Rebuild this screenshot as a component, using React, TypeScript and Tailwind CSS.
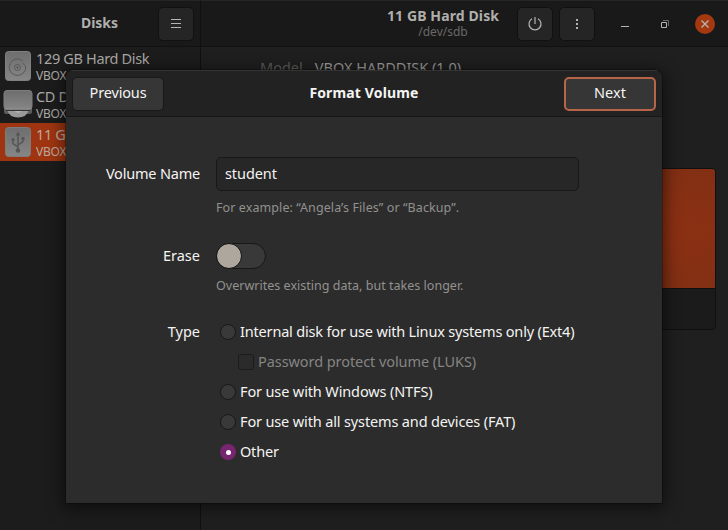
import React from "react";

function HardDiskIcon() {
  return (
    <svg width="26" height="30" viewBox="0 0 26 30" fill="none">
      <defs>
        <linearGradient id="metal" x1="0" y1="0" x2="0" y2="1">
          <stop offset="0" stopColor="#6e6e6e" />
          <stop offset="1" stopColor="#868686" />
        </linearGradient>
      </defs>
      <rect x="0.5" y="0.5" width="25" height="29" rx="3" fill="url(#metal)" stroke="#808080" />
      <path d="M17.800 9.800A8.300 8.300 0 1 0 20.800 16L17.600 11.800" stroke="#555" strokeWidth="0.900" />
      <circle cx="12.500" cy="16.500" r="3" stroke="#555" strokeWidth="0.900" />
      <circle cx="12.500" cy="16.500" r="1" fill="#4a4a4a" />
    </svg>
  );
}

function OpticalDriveIcon() {
  return (
    <svg width="30" height="28" viewBox="0 0 30 28" fill="none">
      <path d="M1 19h28v3q0 2-2 2H3q-2 0-2-2z" fill="#5b5b5b" />
      <path d="M4 20h22q-2.500 7.500-11 7.500T4 20z" fill="#999" />
      <path d="M11 20h8q-1.500 3-4 3t-4-3z" fill="#b4b4b4" />
      <rect x="1" y="0.500" width="28" height="19" rx="3" fill="url(#metal)" stroke="#7e7e7e" />
      <path d="M1.500 18.500h27" stroke="#8b8b8b" />
      <path d="M3 20.500h24" stroke="#343434" />
    </svg>
  );
}

function UsbDiskIcon() {
  return (
    <svg width="26" height="30" viewBox="0 0 26 30" fill="none">
      <rect x="0.500" y="0.500" width="25" height="29" rx="3" fill="url(#metal)" stroke="#7c7c7c" />
      <path d="M13 24V7M13 20l-5-3.500V13M13 18l5-3.500V12" stroke="#555" strokeWidth="1.500" />
      <path d="M13 4.500l-2.400 4h4.800z" fill="#555" />
      <circle cx="13" cy="23.500" r="2.200" fill="#555" />
      <circle cx="8" cy="12.500" r="1.600" fill="#555" />
      <rect x="16.500" y="10" width="3" height="3" fill="#555" />
    </svg>
  );
}

function HeaderButton({ className = "", children }: { className?: string; children: React.ReactNode }) {
  return (
    <button className={`flex h-[34px] w-9 shrink-0 items-center justify-center rounded-[5px] border border-[#111] bg-[#252525] text-[#b4b4b2] ${className}`}>
      {children}
    </button>
  );
}

function DiskRow({ icon, title, selected = false }: { icon: React.ReactNode; title: string; selected?: boolean }) {
  return (
    <div className={`flex h-[38px] items-center whitespace-nowrap ${selected ? "bg-[#9f3510]" : ""}`}>
      <div className="flex w-9 shrink-0 justify-center">{icon}</div>
      <div className={selected ? "text-[#bcaaa0]" : "text-[#aaa9a6]"}>
        <div className="h-[19px] text-[14.5px] leading-[18px] tracking-[-0.34px]">{title}</div>
        <div className="h-4 text-[12px] leading-[15px] tracking-[-0.2px]">VBOX HARDDISK</div>
      </div>
    </div>
  );
}

function Radio({ checked = false }: { checked?: boolean }) {
  return (
    <span className={`flex size-4 shrink-0 items-center justify-center rounded-full ${checked ? "bg-[#772571]" : "border border-[#181818] bg-[#393939]"}`}>
      {checked && <span className="size-[5px] rounded-full bg-white" />}
    </span>
  );
}

function RadioRow({ label, checked, className }: { label: string; checked?: boolean; className: string }) {
  return (
    <label className="flex h-[30px] items-center gap-1">
      <Radio checked={checked} />
      <span className={className}>{label}</span>
    </label>
  );
}

function FormatDialog() {
  return (
    <div className="absolute top-[70px] left-[66px] flex h-[433px] w-[596px] flex-col overflow-hidden rounded-t-[8px] bg-[#2c2c2c] text-[14.5px] text-[#f4f4f2] shadow-[0_3px_16px_3px_rgba(0,0,0,0.5),0_0_0_1px_rgba(0,0,0,0.25)]">
      <div className="flex h-[47px] shrink-0 items-center justify-between border-t border-b border-t-[#343434] border-b-[#161616] bg-[#222] px-1.5">
        <button className="h-[34px] w-[92px] rounded-[5px] border border-[#181818] bg-[#363636] pb-0.5 tracking-[-0.15px]">Previous</button>
        <h1 className="pb-0.5 text-[14px] font-bold tracking-[0.15px]">Format Volume</h1>
        <button className="h-[34px] w-[92px] rounded-[5px] border-2 border-[#b86448] bg-[#363636] pb-0.5 tracking-[0px]">Next</button>
      </div>
      <div className="flex flex-col pt-10 whitespace-nowrap">
        <div className="flex">
          <span className="mr-4 w-[134px] text-right leading-[32px] tracking-[-0.2px]">Volume Name</span>
          <div>
            <div className="h-[34px] w-[363px] rounded-[5px] border border-[#181818] bg-[#272727] px-2 leading-[30px] tracking-[-0.08px]">student</div>
            <p className="mt-[7px] h-5 text-[12.5px] leading-5 tracking-[0.09px] text-[#92918f]">For example: “Angela’s Files” or “Backup”.</p>
          </div>
        </div>
        <div className="mt-[25px] flex">
          <span className="mr-4 w-[134px] text-right leading-[24px] tracking-[0px]">Erase</span>
          <div>
            <div className="h-[26px] w-[50px] rounded-full border border-[#181818] bg-[#393939]">
              <div className="-mt-px -ml-px size-[26px] rounded-full border border-[#111] bg-[#aea79d]" />
            </div>
            <p className="mt-[7px] h-5 text-[12.5px] leading-5 tracking-[0.02px] text-[#92918f]">Overwrites existing data, but takes longer.</p>
          </div>
        </div>
        <div className="mt-[21px] flex">
          <span className="mr-5 w-[134px] text-right leading-[28px] tracking-[0px]">Type</span>
          <div>
            <RadioRow label="Internal disk for use with Linux systems only (Ext4)" className="tracking-[-0.18px]" />
            <label className="ml-[18px] flex h-[30px] items-center gap-1">
              <span className="size-4 rounded-[3px] border border-[#1c1c1c] bg-[#2b2b2b]" />
              <span className="tracking-[-0.07px] text-[#858583]">Password protect volume (LUKS)</span>
            </label>
            <RadioRow label="For use with Windows (NTFS)" className="tracking-[-0.13px]" />
            <RadioRow label="For use with all systems and devices (FAT)" className="tracking-[-0.14px]" />
            <RadioRow label="Other" checked className="tracking-[-0.2px]" />
          </div>
        </div>
      </div>
    </div>
  );
}

export default function App() {
  return (
    <div className="relative flex h-[530px] w-[728px] flex-col overflow-hidden bg-[#1f1f1f] font-['Noto_Sans',sans-serif]">
      <header className="flex h-[47px] shrink-0 border-t border-b border-t-[#252525] border-b-[#111] bg-[#191919] text-[#b0afac]">
        <div className="flex w-[201px] items-center border-r border-[#101010] pr-[6px]">
          <div className="w-[158px] pb-0.5 pl-[41px] text-center text-[14px] font-bold tracking-[0px]">Disks</div>
          <HeaderButton>
            <svg width="12" height="12" stroke="currentColor"><path d="M1 1.500h10M1 5.500h10M1 9.500h10" /></svg>
          </HeaderButton>
        </div>
        <div className="flex flex-1 items-center">
          <div className="ml-[172px] w-[140px] text-center whitespace-nowrap">
            <div className="text-[14px] leading-[16px] font-bold tracking-[0.12px]">11 GB Hard Disk</div>
            <div className="text-[12px] leading-[15px] tracking-[0px] text-[#6b6867]">/dev/sdb</div>
          </div>
          <HeaderButton className="ml-1">
            <svg width="16" height="16" fill="none" stroke="currentColor" strokeWidth="1.200"><path d="M8 1v7M5 2.700a6 6 0 1 0 6 0" /></svg>
          </HeaderButton>
          <HeaderButton className="ml-1.5">
            <svg width="4" height="12" fill="currentColor"><path d="M1 1h2v2H1zM1 5h2v2H1zM1 9h2v2H1z" /></svg>
          </HeaderButton>
          <svg className="ml-[26px]" width="8" height="8" fill="#b4b4b2"><path d="M0 6h8v1H0z" /></svg>
          <svg className="ml-8" width="8" height="8" fill="none"><path d="M.5 2.500h5v5h-5z" stroke="#b4b4b2" /><path d="M2 .5h5.500V6" stroke="#686866" /></svg>
          <div className="ml-[26px] flex size-5 items-center justify-center rounded-full bg-[#a33811]">
            <svg width="8" height="8" stroke="#b9b5b1" strokeWidth="1.300"><path d="M.5.5l7 7M7.500.5l-7 7" /></svg>
          </div>
        </div>
      </header>
      <div className="flex min-h-0 flex-1">
        <aside className="w-[201px] shrink-0 border-r border-[#101010] bg-[#1c1c1c]">
          <DiskRow icon={<HardDiskIcon />} title="129 GB Hard Disk" />
          <DiskRow icon={<OpticalDriveIcon />} title="CD Drive" />
          <DiskRow icon={<UsbDiskIcon />} title="11 GB Hard Disk" selected />
        </aside>
        <main className="flex-1">
          <div className="flex h-[121px] gap-3 pt-[10px] pl-[59px] text-[14.5px] leading-5 tracking-[0px] whitespace-nowrap">
            <span className="text-[#5c5c5b]">Model</span>
            <span className="text-[#9b9a98]">VBOX HARDDISK (1.0)</span>
          </div>
          <div className="mr-3 ml-[17px] h-[162px] overflow-hidden rounded-[4px] border border-[#101010] bg-[#1b1b1b]">
            <div className="h-[120px] border-b border-[#101010] bg-[radial-gradient(ellipse_at_78%_50%,#8c3013,#7f2f14)]" />
          </div>
        </main>
      </div>
      <FormatDialog />
    </div>
  );
}
